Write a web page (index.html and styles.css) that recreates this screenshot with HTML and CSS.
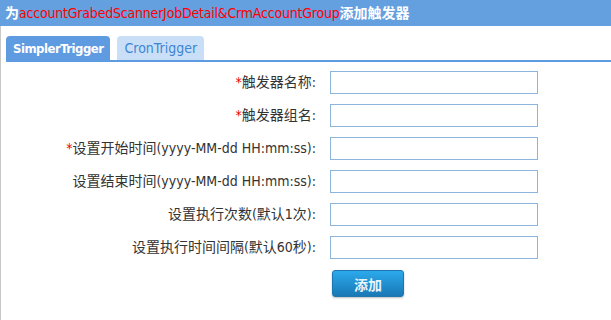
FILE: index.html
```html
<!DOCTYPE html>
<html>
    <head>
        <title>添加触发器</title>
        <link rel="stylesheet" href="styles.css">
    </head>
    <body>
        <div id="title">为<span class="job-name">accountGrabedScannerJobDetail&amp;CrmAccountGroup</span>添加触发器</div>
        <div id="content">
            <div id="tabs">
                <div class="tab active">SimplerTrigger</div>
                <div class="tab">CronTrigger</div>
            </div>
            <form id="trigger-form">
                <label class="field-label"><span class="required">*</span>触发器名称:</label>
                <input class="field-input" type="text">
                <label class="field-label"><span class="required">*</span>触发器组名:</label>
                <input class="field-input" type="text">
                <label class="field-label"><span class="required">*</span>设置开始时间(yyyy-MM-dd HH:mm:ss):</label>
                <input class="field-input" type="text">
                <label class="field-label">设置结束时间(yyyy-MM-dd HH:mm:ss):</label>
                <input class="field-input" type="text">
                <label class="field-label">设置执行次数(默认1次):</label>
                <input class="field-input" type="text">
                <label class="field-label">设置执行时间间隔(默认60秒):</label>
                <input class="field-input" type="text">
                <span></span>
                <div class="actions"><button type="button" id="add-btn">添加</button></div>
            </form>
        </div>
    </body>
</html>
```

FILE: styles.css
```css
body {
    background: #ffffff;
    font-family: "DejaVu Sans Condensed", "DejaVu Sans", "Noto Sans CJK SC", sans-serif;
    font-size: 14px;
    color: #333333;
    margin: 0px;
    height: 320px;
    overflow: hidden;
}
#title {
    background: #649fdf;
    color: #ffffff;
    font-weight: bold;
    height: 26px;
    line-height: 26px;
    padding-left: 5px;
    white-space: nowrap;
}
.job-name {
    color: #ff0000;
    font-weight: normal;
    letter-spacing: -0.2px;
}
#content {
    border-left: 1px solid #c8c8c8;
    height: 294px;
}
#tabs {
    display: flex;
    gap: 7px;
    margin-left: 5px;
    padding-top: 10px;
    border-bottom: 2px solid #5f9be0;
}
.tab {
    background: #c9dff8;
    color: #3e86d2;
    height: 24px;
    line-height: 25px;
    padding: 0px 7px;
    border-radius: 4px 4px 0px 0px;
    cursor: pointer;
}
.tab.active {
    background: #5f9be0;
    color: #ffffff;
    font-weight: bold;
    font-size: 13px;
    letter-spacing: -0.5px;
}
#trigger-form {
    display: grid;
    grid-template-columns: 315px 208px;
    grid-auto-rows: 23px;
    column-gap: 14px;
    row-gap: 10px;
    padding-top: 9px;
    margin: 0px;
}
.field-label {
    text-align: right;
    line-height: 23px;
    white-space: nowrap;
}
.required {
    color: #e60000;
}
.field-input {
    box-sizing: border-box;
    width: 208px;
    height: 23px;
    border: 1px solid #8db4dc;
    margin: 0px;
    padding: 2px 4px;
    font: inherit;
}
.actions {
    padding-top: 1px;
}
#add-btn {
    width: 72px;
    height: 27px;
    margin-left: 2px;
    background: linear-gradient(#2ba9ec, #1978b5);
    border: 1px solid #1d76ae;
    border-radius: 3px;
    box-shadow: 0px 1px 2px rgba(0,0,0,0.25);
    color: #e8f4fc;
    font-family: "Noto Sans CJK SC", sans-serif;
    font-weight: bold;
    font-size: 14px;
    cursor: pointer;
}
```
